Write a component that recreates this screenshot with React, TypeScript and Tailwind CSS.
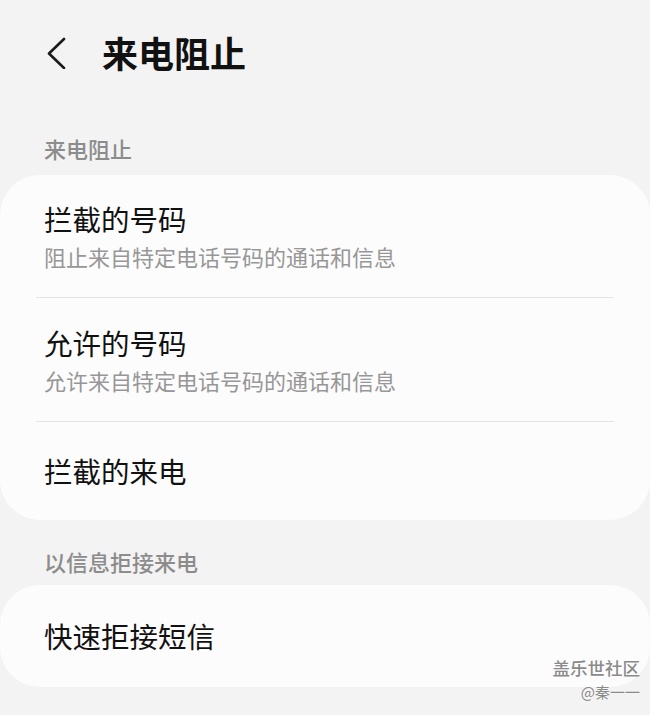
import React from "react";

const font = { fontFamily: '"Noto Sans CJK SC", "Noto Sans", sans-serif' };

function SectionLabel({ children, className }: { children: React.ReactNode; className: string }) {
  return (
    <div className={`px-[44px] text-[22px] leading-[32px] font-medium text-[#8c8c8c] ${className}`}>
      {children}
    </div>
  );
}

function Row({ title, sub, height }: { title: string; sub?: string; height: string }) {
  return (
    <div className={`flex flex-col justify-center px-[44px] ${height}`}>
      <div className="text-[28.5px] leading-[36px] text-[#111]">{title}</div>
      {sub && <div className="mt-[4px] text-[22px] leading-[30px] text-[#979797]">{sub}</div>}
    </div>
  );
}

export default function App() {
  return (
    <div className="relative w-[650px] h-[715px] overflow-hidden bg-[#f3f3f3]" style={font}>
      {/* Header */}
      <div className="flex items-center h-[104px] pl-[45px]">
        <svg width="22" height="34" viewBox="0 0 22 34" fill="none">
          <path d="M19 4 L4 18.5 L19 33" stroke="#1a1a1a" strokeWidth="2.6" strokeLinecap="round" strokeLinejoin="round" />
        </svg>
        <h1 className="ml-[35px] text-[36px] leading-[44px] font-bold text-[#111]">来电阻止</h1>
      </div>

      <SectionLabel className="pt-[28px] mb-[11px]">来电阻止</SectionLabel>

      <div className="rounded-[40px] bg-[#fcfcfc]">
        <Row title="拦截的号码" sub="阻止来自特定电话号码的通话和信息" height="h-[122px]" />
        <div className="mx-[36px] h-px bg-[#e4e4e4]" />
        <Row title="允许的号码" sub="允许来自特定电话号码的通话和信息" height="h-[123px]" />
        <div className="mx-[36px] h-px bg-[#e4e4e4]" />
        <Row title="拦截的来电" height="h-[98px]" />
      </div>

      <SectionLabel className="pt-[25px] mb-[8px]">以信息拒接来电</SectionLabel>

      <div className="rounded-[40px] bg-[#fcfcfc]">
        <Row title="快速拒接短信" height="h-[102px]" />
      </div>

      {/* Watermark */}
      <div className="absolute right-[10px] top-[655px] flex flex-col items-end text-[#8a8a8a] [text-shadow:0_0_2px_#fff]">
        <div className="text-[17.5px] leading-[26px] font-medium">盖乐世社区</div>
        <div className="text-[15px] leading-[22px]">@秦一一</div>
      </div>
    </div>
  );
}
